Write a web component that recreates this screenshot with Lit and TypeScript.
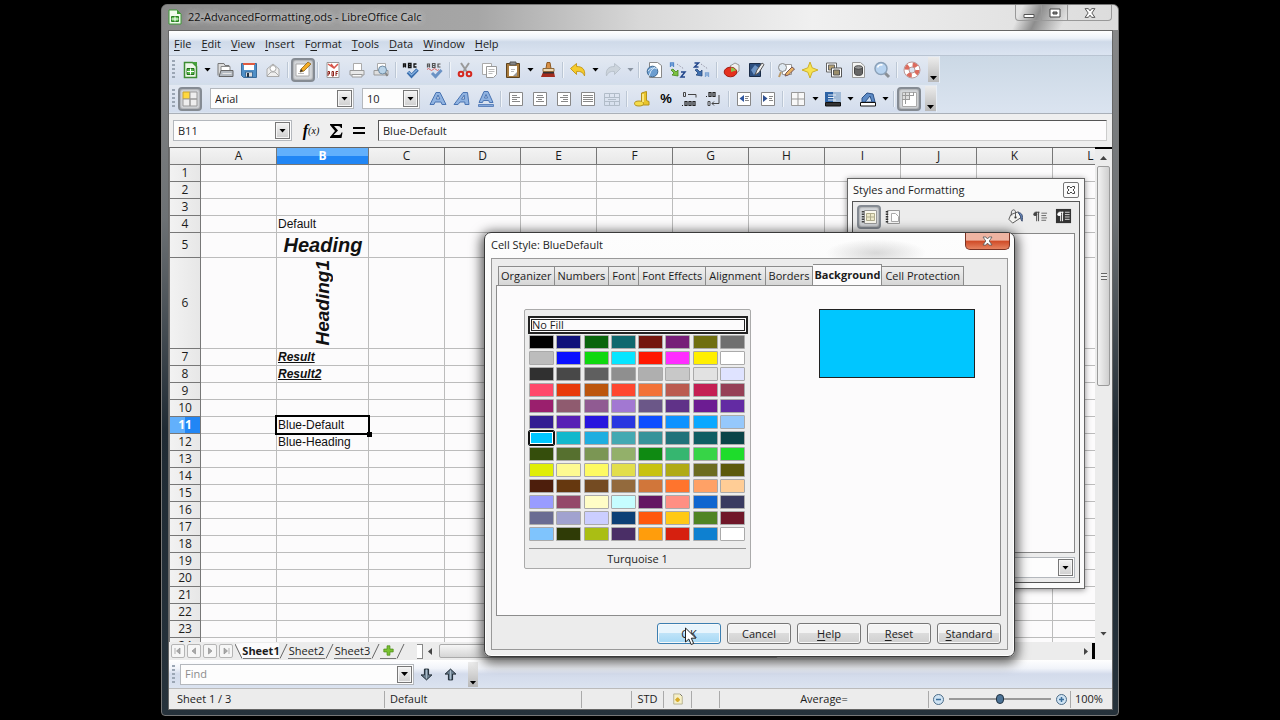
import { LitElement, html, css, svg, nothing } from "lit";
import { customElement, property, state } from "lit/decorators.js";
import { classMap } from "lit/directives/class-map.js";

const page = svg`<path d="M2.500 2.500h13v13h-13z" fill="#fff" stroke="#888"/>`;
const letterA = "M1 14.500 L7 2.500 H11 L17 14.500 H13 L12 12 H6 L5 14.500Z M7.200 9 H10.800 L9 5Z";

const icons: Record<string, unknown> = {
  newDoc: svg`<path d="M3.500 1.500h8l4 4v11h-12z" fill="#eef8ea" stroke="#3d8d33" stroke-width="1.500"/><path d="M11 1l5 5V1z" fill="#46a13b"/><path d="M6 7.500h7v6H6z" fill="#54b848" stroke="#256e1e"/><path d="M6 10.500h7M9.500 7.500v6" stroke="#fff"/>`,
  open: svg`<path d="M2 14.500V2.500h6l1 2h4v3" fill="#dcdcdc" stroke="#777"/><path d="M5 5.500h9v5H5z" fill="#fff" stroke="#888"/><path d="M3 15.500l2-6h12v6z" fill="#b4bac1" stroke="#666"/><path d="M6.500 12.500h9" stroke="#e6e6e6"/>`,
  save: svg`<path d="M1.500 2.500h15v14h-13l-2-2z" fill="#4f8fc7" stroke="#3a6b9a"/><path d="M4 2h10v7H4z" fill="#fff"/><path d="M3 2h12v2H3z" fill="#df5b40"/><path d="M5.500 11h7v5h-7z" fill="#ddd" stroke="#3a6b9a"/><path d="M7 12h2v4H7z" fill="#234"/>`,
  mail: svg`<path d="M3 8l6-5 6 5v7.500H3z" fill="#eee" stroke="#aaa"/><circle cx="9" cy="7.500" r="3" fill="#fff" stroke="#aaa"/><path d="M3 15l4-4h4l4 4" fill="none" stroke="#aaa"/>`,
  edit: svg`<path d="M2 3h13v12H2z" fill="#fff" stroke="#aaa"/><path d="M6 11l1-3 7-7 3 2-7 7z" fill="#f3ab23" stroke="#8d6420" stroke-width=".8"/><path d="M6 11l1-3 2 2z" fill="#333"/><path d="M4 12.500h6" stroke="#bbb"/>`,
  pdf: svg`<path d="M3 1.500h12v15H3z" fill="#fff" stroke="#999"/><path d="M4 3l6 4 4-4M7 3l3 4" stroke="#d8554b" stroke-width="1.500" fill="none"/><path d="M4 15V10.500h1.500V13H4M8 10.500V15h1.500v-4.500zM12 15v-4.500h2M12 12.500h1.500" stroke="#8d2019" fill="none"/>`,
  print: svg`<path d="M5.500 9V2.500h8V9" fill="#fff" stroke="#aaa"/><path d="M2 14V9.500h14V14z" fill="#e8e8e8" stroke="#999"/><path d="M4 13.500h10v2.500H4z" fill="#fafafa" stroke="#999"/>`,
  preview: svg`<path d="M5.500 9V2.500h8V9" fill="#fff" stroke="#aaa"/><path d="M2 14V9.500h14V14z" fill="#dedede" stroke="#999"/><circle cx="10.500" cy="9" r="4" fill="#b9d3e8" stroke="#6f8ba3"/><path d="M13.500 12l2 3" stroke="#888" stroke-width="2"/>`,
  spell: svg`<path d="M1.500 6.500V3h2v3.500M1.500 5h2M6.500 6.500V2.500H9v4zM6.500 4.500H9M14.500 3H12v3h2.500" stroke="#111" stroke-width="1.300" fill="none"/><path d="M6 11l3.500 4L15.500 8.500" stroke="#3b6fae" stroke-width="3.500" fill="none"/><path d="M6.500 11l3 3L15 9" stroke="#86b1e0" stroke-width="1.200" fill="none"/>`,
  autospell: svg`<path d="M1.500 6.500V3h2v3.500M1.500 5h2M6.500 6.500V2.500H9v4zM6.500 4.500H9M14.500 3H12v3h2.500" stroke="#555" stroke-width="1.200" fill="none"/><path d="M1 8.500q1.500-2 3 0t3 0 3 0 3 0" stroke="#d66" fill="none"/><path d="M6 12l3.500 3.500L15.500 9" stroke="#6b92c4" stroke-width="3" fill="none"/>`,
  cut: svg`<path d="M5 2l6 9M13 2L7 11" stroke="#9a9a9a" stroke-width="2"/><circle cx="5" cy="13" r="2.300" fill="none" stroke="#d5281f" stroke-width="2"/><circle cx="13" cy="13" r="2.300" fill="none" stroke="#d5281f" stroke-width="2"/>`,
  copy: svg`<path d="M2.500 2.500h9v11h-9z" fill="#fff" stroke="#aaa"/><path d="M6.500 5.500h10v8l-3 3h-7z" fill="#fff" stroke="#999"/><path d="M8.500 8.500h6M8.500 10.500h6M8.500 12.500h4" stroke="#bbb"/>`,
  paste: svg`<path d="M2.500 2.500h13v14h-13z" fill="#a77a3c" stroke="#5c421f"/><path d="M5 5h8v10H5z" fill="#fff"/><path d="M6 1h6v3H6z" fill="#888" stroke="#555"/><path d="M7 8.500h4M7 10.500h3" stroke="#bbb"/><path d="M9 15l4-4v4z" fill="#999"/>`,
  brush: svg`<path d="M8 1.500h3l1 6H7z" fill="#d99046" stroke="#8f5a22"/><path d="M4 7.500h11v3H4z" fill="#eed9b4" stroke="#8f6a3a"/><path d="M4 11h11l1 5H2z" fill="#a32b1e"/><path d="M4 11h11v1.500H4z" fill="#333"/>`,
  undo: svg`<path d="M1.500 7.500l6-5v3c6 0 9 3 8 9.500-1-3-3-5-8-4.500v3z" fill="#f5cb2a" stroke="#c79b1e"/>`,
  redo: svg`<path d="M16.500 7.500l-6-5v3c-6 0-9 3-8 9.500 1-3 3-5 8-4.500v3z" fill="#ccd4dc" stroke="#b9c2cc"/>`,
  link: svg`<path d="M4.500 1.500h8l4 3v12h-12z" fill="#fff" stroke="#888"/><circle cx="7.500" cy="10.500" r="5.300" fill="#6b9dd0" stroke="#3d678f"/><path d="M3 10q5-5 9-2M4 15q1-6 6-9" stroke="#d6e8f8" fill="none"/>`,
  sortAsc: svg`<path d="M1.500 6V2h3v4M1.500 4h3" stroke="#5288cc" stroke-width="1.300" fill="none"/><path d="M12 11h4l-4 5h4" stroke="#23478c" stroke-width="1.500" fill="none"/><path d="M8 3l7 5" stroke="#99a" stroke-dasharray="1.500 1.500"/><path d="M2 9l3 3-2 2 6 1V9L7 11 4 8z" fill="#7cc142" stroke="#45861c" stroke-width=".8"/>`,
  sortDesc: svg`<path d="M1.500 2h4l-4 4h4" stroke="#23478c" stroke-width="1.500" fill="none"/><path d="M12.500 16v-4h3v4M12.500 14h3" stroke="#7da4d4" stroke-width="1.300" fill="none"/><path d="M8 3l7 5" stroke="#99a" stroke-dasharray="1.500 1.500"/><path d="M2 9l3 3-2 2 6 1V9L7 11 4 8z" fill="#3f6fb0" stroke="#27497c" stroke-width=".8"/>`,
  chart: svg`<path d="M7 5l5-3 4 2v6l-4 3z" fill="#efefef" stroke="#999"/><ellipse cx="7.500" cy="11" rx="6.300" ry="4.800" fill="#e5301e" stroke="#a31b10"/><path d="M8 11V6.500a6 4 0 0 1 5 3z" fill="#8fc04a"/>`,
  draw: svg`<path d="M2.500 2.500h11v13h-11z" fill="#2c4f80" stroke="#1a2c48"/><path d="M4 9l4-5 4 3-5 7z" fill="#6c93c4"/><path d="M8 14l2-5 5-7 2 1.500-5 8z" fill="#eee" stroke="#555"/>`,
  find: svg`<path d="M5.500 3.500h9v10h-9z" fill="#fff" stroke="#999"/><circle cx="5.500" cy="6.500" r="4" fill="#dfe9f2" stroke="#888"/><path d="M8 15l1-3 6-6 2.500 2-6 6z" fill="#e8b264" stroke="#755"/><path d="M4 11l-2 5" stroke="#b96" stroke-width="2"/>`,
  navigator: svg`<path d="M9 1l2.200 5.800L17 9l-5.800 2.200L9 17l-2.200-5.800L1 9l5.800-2.200z" fill="#f7e352" stroke="#cdb02c"/>`,
  gallery: svg`<path d="M1.500 2h10v9h-10z" fill="#fff" stroke="#666"/><path d="M3.500 4h6v5h-6z" fill="#b7a375" stroke="#666"/><path d="M6.500 7h10v9h-10z" fill="#fff" stroke="#555"/><path d="M8.500 9h6v5h-6z" fill="#9b8e6b" stroke="#555"/>`,
  data: svg`<path d="M3.500 1.500h8l4 3.500v11.500h-12z" fill="#f6f6f4" stroke="#999"/><path d="M5.500 6.500v6c0 2.500 8 2.500 8 0v-6" fill="#666" stroke="#444"/><ellipse cx="9.500" cy="6.500" rx="4" ry="1.800" fill="#999" stroke="#444"/>`,
  zoom: svg`<path d="M12 12l4 4" stroke="#8a8f95" stroke-width="3"/><circle cx="8" cy="7.500" r="6" fill="#b7d3f0" stroke="#8ba1b8" stroke-width="1.500"/><path d="M4.500 6.500a4 4 0 0 1 5-2.500" stroke="#fff" stroke-width="1.500" fill="none"/>`,
  help: svg`<circle cx="9" cy="9" r="5.500" fill="none" stroke="#fff" stroke-width="5"/><circle cx="9" cy="9" r="5.500" fill="none" stroke="#dc6b5e" stroke-width="4.500" stroke-dasharray="4.320 4.320"/><circle cx="9" cy="9" r="8" fill="none" stroke="#b99"/><circle cx="9" cy="9" r="3" fill="none" stroke="#b99"/>`,
  styles: svg`<path d="M2 2h7v7H2z" fill="#ffd83d" stroke="#c9a32a"/><path d="M9 2h7v7H9zM2 9h7v7H2zM9 9h7v7H9z" fill="#eee" stroke="#999"/>`,
  bold: svg`<path d=${letterA} fill="#8fb2e0" stroke="#4a74b2" fill-rule="evenodd"/>`,
  italic: svg`<path d="M1 14.500L10 2.500h4.500l1.500 12h-4l-.2-2.500H7L5 14.500zM8.500 9.200h3l-.3-4z" fill="#8fb2e0" stroke="#4a74b2" fill-rule="evenodd"/>`,
  underline: svg`<path d="M2 12.500L7 1.500h4l5 11h-3.500l-.8-2H6.300l-.8 2zM7.500 8h3L9 4.500z" fill="#8fb2e0" stroke="#4a74b2" fill-rule="evenodd"/><path d="M1.500 14.500h15v2h-15z" fill="#86a9da" stroke="#4a74b2" stroke-width=".8"/>`,
  left: svg`${page}<path d="M5 5.500h5M5 7.500h8M5 9.500h5M5 11.500h8" stroke="#888"/>`,
  center: svg`${page}<path d="M6 5.500h6M5 7.500h8M7 9.500h4M5 11.500h8" stroke="#888"/>`,
  right: svg`${page}<path d="M8 5.500h5M5 7.500h8M8 9.500h5M6 11.500h7" stroke="#888"/>`,
  justify: svg`${page}<path d="M4 5.500h10M4 7.500h10M4 9.500h10M4 11.500h10" stroke="#888"/>`,
  merge: svg`<path d="M1.500 3.500h15v12h-15zM1.500 7.500h15M1.500 11.500h15M6.500 3.500v4M11.500 3.500v4M6.500 11.500v4M11.500 11.500v4M5 9.500h8" fill="none" stroke="#b1bcc8"/>`,
  currency: svg`<path d="M8.500 3l5-1.500v9l2.500 1V15H8.500z" fill="#e9c52c" stroke="#b3921c"/><ellipse cx="6" cy="13.500" rx="4.500" ry="2.500" fill="#f5dc4a" stroke="#b3921c"/><path d="M10 4v8" stroke="#fff1a0" stroke-width="1.500"/>`,
  addDec: svg`<path d="M2.500 2.500h2v4h-2zM7 4.500h8v3" stroke="#444" fill="none"/><path d="M1 15.500h1M4 11.500h2v4H4zM8 11.500h2v4H8zM12 11.500h2v4h-2z" stroke="#222" stroke-width="1.200" fill="none"/>`,
  delDec: svg`<path d="M1 6.500h1M4 2.500h2v4H4zM8 2.500h2v4H8z" stroke="#222" stroke-width="1.200" fill="none"/><path d="M3 11.500h2v4H3zM7 13.500h7V5M9 11.500l-2 2 2 2" stroke="#444" fill="none"/>`,
  outdent: svg`${page}<path d="M9 5v7L4.500 8.500z" fill="#2e56a0"/><path d="M10 6.500h4M10 8.500h3M10 10.500h4" stroke="#888"/>`,
  indent: svg`${page}<path d="M4 5v7l4.500-3.500z" fill="#2e4f90"/><path d="M10 6.500h4M10 8.500h3M10 10.500h4" stroke="#888"/>`,
  borders: svg`<path d="M2.500 2.500h13v13h-13zM2.500 9h13M9 2.500v13" fill="#f8f8f8" stroke="#999"/>`,
  bgColor: svg`<path d="M1 2h16v10H1z" fill="#2d63a5"/><path d="M9 2h8v10H9z" fill="#a3bbd6"/><path d="M4 5h8M4 7.500h6M4 10h8" stroke="#e6eef8"/><path d="M1.500 12.500h15v3.500h-15z" fill="#333" stroke="#111"/>`,
  lineColor: svg`<path d="M3 12V8l5-5 6 1 2 8z" fill="#5d8bc6" stroke="#2c5288"/><path d="M6 12l5-6 2 6z" fill="#d4e2f2" stroke="#2c5288"/><path d="M1.500 12.500h15v3.500h-15z" fill="#fff" stroke="#111"/>`,
  gridLines: svg`<path d="M2.500 2.500h14v14h-14z" fill="#fff" stroke="#aaa"/><path d="M3 3h6v6H3z" fill="#ddd"/><path d="M2 5.500h12M2 9.500h8M5.500 2v12M9.500 2v8M13.500 2v4" stroke="#999"/>`,
  cellStyles: svg`<path d="M4.500 2.500h12v13h-12z" fill="#fbf9ee" stroke="#999"/><path d="M3 3v12" stroke="#444" stroke-width="2.500" stroke-dasharray="1.500 1"/><path d="M6.500 5.500h8v7h-8zM6.500 9h8M10.500 5.500v7" fill="#eeeacb" stroke="#b0ac8c"/>`,
  pageStyles: svg`<path d="M3.500 2.500h12v13h-12z" fill="#f7f7f7" stroke="#999"/><path d="M3 3v12" stroke="#333" stroke-width="2.500" stroke-dasharray="1.500 1"/><path d="M7.500 5.500h4l3 3v5h-7z" fill="#fff" stroke="#aaa"/>`,
  fill: svg`<path d="M4 7l8-3 3 6-9 6-4-4z" fill="#f3f3f0" stroke="#555"/><path d="M5 8c-2-6 3-8 4-4v5" stroke="#555" fill="none"/><path d="M12 5c4 0 5 3 4 9-2-2-1-5-2-6z" fill="#6d91c8" stroke="#346"/><circle cx="9" cy="10" r="1.200" fill="#333"/>`,
  newStyle: svg`<path d="M6 4v10M8 4v10M9 4.500H4" stroke="#444" fill="none"/><circle cx="4.500" cy="6.500" r="2" fill="#444"/><path d="M11 5.500h6M11 8h5M11 10.500h6M11 13h5" stroke="#666"/>`,
  updateStyle: svg`<path d="M1 1h16v15H1z" fill="#333"/><path d="M6 4v10M8 4v10M9 4.500H4" stroke="#fff" fill="none"/><circle cx="4.500" cy="6.500" r="2" fill="#fff"/><path d="M10.500 4.500h5M10.500 7h5M10.500 9.500h5M10.500 12h5" stroke="#ddd"/>`,
  down: svg`<path d="M6.500 2.500h5v7h4L9 15.500 2.500 9.500h4z" fill="#6d8192" stroke="#1f2a33" stroke-width="1.200"/><path d="M9 3v11" stroke="#b7c6d2"/>`,
  up: svg`<path d="M6.500 15.500h5v-7h4L9 2.500 2.500 8.500h4z" fill="#6d8192" stroke="#1f2a33" stroke-width="1.200"/><path d="M9 4v11" stroke="#b7c6d2"/>`,
  modified: svg`<path d="M3.500 2.500h8l3 3v10h-11z" fill="#f6f0c8" stroke="#aaa584"/><path d="M8.500 7v6M5.500 10h6" stroke="#dbb236" stroke-width="2"/><circle cx="8.500" cy="10" r="2.500" fill="#d8ab2c"/><path d="M12 3l2 2" stroke="#555"/>`,
  plus: svg`<path d="M7 2.500h4V7h4.500v4H11v4.500H7V11H2.500V7H7z" fill="#79c231" stroke="#4b8a18"/>`,
};

const icon = (name: string, size = 18) =>
  html`<svg width=${size} height=${size} viewBox="0 0 18 18" aria-hidden="true">${icons[name]}</svg>`;

const shared = css`
  :host { box-sizing: border-box; font: 11px/16px "Open Sans", "Noto Sans", sans-serif; color: #1c1c1c; }
  * { box-sizing: border-box; }
  button, input, select { font: inherit; color: inherit; margin: 0; padding: 0; border: 0; background: none; border-radius: 0; outline: none; min-width: 0; }
  button { display: flex; align-items: center; justify-content: center; flex: none; }
  svg { display: block; flex: none; }
  .tool { width: 24px; height: 24px; }
  .pressed { border: 2px solid #858b93; border-radius: 4px; background: #d3d6da; box-shadow: inset 0 0 2px #666; }
  .combo { display: flex; align-items: stretch; height: 21px; border: 1px solid #b4b8bd; background: #fdfdfd; padding: 1px; }
  .combo input, .combo select { appearance: none; flex: 1; padding-left: 3px; }
  .combo input::placeholder { color: #8c8c8c; opacity: 1; }
  .combo.pick { display: grid; }
  .combo.pick > * { grid-area: 1 / 1; }
  .combo .drop { justify-self: end; }
  .drop { display: flex; align-items: center; justify-content: center; width: 15px; border: 1px solid #777; background: linear-gradient(#f4f4f4, #cfcfcf); box-shadow: inset 0 0 0 1px #f6f6f6; pointer-events: none; }
  .tri { width: 7px; height: 4px; background: #000; clip-path: polygon(0 0, 100% 0, 50% 100%); }
`;

const tri = html`<span class="tri"></span>`;

const standardBar = ["newDoc", ">", "open", "save", "mail", "|", "*edit", "|", "pdf", "print", "preview", "|", "spell", "autospell", "|", "cut", "copy", "paste", ">", "brush", "|", "undo", ">", "redo", "<", "|", "link", "sortAsc", "sortDesc", "|", "chart", "draw", "|", "find", "navigator", "gallery", "data", "zoom", "|", "help"];
const formatBar = ["bold", "italic", "underline", "|", "left", "center", "right", "justify", "merge", "|", "currency", "%", "addDec", "delDec", "|", "outdent", "indent", "|", "borders", ">", "bgColor", ">", "lineColor", ">", "|", "*gridLines"];

const renderTool = (t: string) => {
  if (t === "|") return html`<span class="sep"></span>`;
  if (t === ">" || t === "<") return html`<button class="caret ${t === "<" ? "off" : ""}" aria-label="More options">${tri}</button>`;
  if (t === "%") return html`<button class="tool percent">%</button>`;
  const pressed = t.startsWith("*");
  const name = pressed ? t.slice(1) : t;
  return html`<button class="tool ${pressed ? "pressed" : ""}" aria-label=${name}>${icon(name)}</button>`;
};

const swatches = `
000000 10127a 0a650d 0f686e 74170e 771f78 6f6e10 6f6f6f
bcbcbc 0a10ff 0fd80f 06e5ff ff1700 ff2dff ffef00 ffffff
303030 484848 5f5f5f 8f8f8f afafaf c8c8c8 e2e2e2 dfe3ff
ff4a6b e83a0a bc560c ff472f f27238 bb5b50 c41f53 964056
9a1f6d 8f5b6f 905b92 a278d2 6b5788 603288 6c1c92 632ba3
331c92 5720b5 2716de 2937e0 0e4eff 0e92ff 0aa8ff 95c8fb
00c6ff 12b8cc 1eaee0 43a9b2 37939a 20727a 0f5e63 0a4448
354e0c 56702f 7b9654 93b06a 0f8a12 36b670 37d447 1edc2b
e0ee06 fdfa92 fdfa62 e2de4b c8c211 b0aa14 6c6c20 5d5a0c
4d1e0c 66380f 744b22 936a3d d1763a ff742d ffa166 ffcd96
999cff 94496a fffdc6 c6fdff 641762 ff8f83 0f65cf 393a60
6a6c92 a1a2cf cbceff 0d4076 ff580e ffc915 508424 701729
7fc4fd 2f3b06 aabe14 4a2e66 ff9d0c d6200f 0e80d0 ffffff`.trim().split(/\s+/).map((c) => "#" + c);

@customElement("calc-sheet")
export class CalcSheet extends LitElement {
  static styles = [shared, css`
    :host { display: flex; flex: 1; min-height: 0; overflow: hidden; background: #fcfbfc; }
    .view { flex: 1; overflow: hidden; min-width: 0; }
    table { table-layout: fixed; width: 0; border-spacing: 0; border-left: 1px solid #777; border-top: 1px solid #666; }
    .head-col { width: 31px; }
    .col { width: 76px; }
    .wide { width: 92px; }
    th { font-weight: 400; font-size: 12px; line-height: 14px; padding: 0; text-align: center; background: linear-gradient(#f3f3f3, #e8e8e8); border-right: 1px solid #777; border-bottom: 1px solid #777; }
    tbody th { background: linear-gradient(90deg, #f2f2f2, #e7e7e7); }
    thead th { height: 16px; }
    thead th.on { background: linear-gradient(#62b0fc 50%, #2186f5 50%); color: #fff; font-weight: 700; }
    tbody th.on { background: linear-gradient(90deg, #62b0fc 50%, #2186f5 50%); color: #fff; font-weight: 700; }
    tr { height: 17px; }
    tr.tall { height: 25px; }
    tr.high { height: 91px; }
    td { padding: 0 0 0 1px; border-right: 1px solid #bcbcbc; border-bottom: 1px solid #bcbcbc; font: 12px/15px "Liberation Sans", Arial, sans-serif; white-space: nowrap; color: #111; }
    .heading { font: italic 700 20px/22px "Liberation Sans", Arial, sans-serif; text-align: center; }
    .turned { display: inline-block; writing-mode: vertical-rl; transform: rotate(180deg); font-size: 19px; vertical-align: middle; }
    .result { font-weight: 700; font-style: italic; text-decoration: underline; }
    .cursor { position: relative; }
    .cursor::before { content: ""; position: absolute; inset: -2px; border: 2px solid #000; }
    .cursor::after { content: ""; position: absolute; right: -4px; bottom: -4px; width: 5px; height: 5px; background: #000; }
    .vbar { width: 17px; flex: none; display: flex; flex-direction: column; align-items: center; background: #ececec; border-top: 2px solid #000; }
    .vbar button { height: 17px; }
    .flip { transform: scaleY(-1); }
    .thumb { width: 13px; height: 220px; border: 1px solid #9b9b9b; border-radius: 2px; background: linear-gradient(90deg, #f2f2f2, #cfcfcf); display: flex; align-items: center; justify-content: center; }
    .grip { width: 6px; height: 7px; background: repeating-linear-gradient(#666 0 1px, #eee 1px 3px); }
    .track { flex: 1; }
    .tri { background: #444; }
  `];

  private text(row: number) {
    switch (row) {
      case 4: return html`<td>Default</td>`;
      case 5: return html`<td class="heading">Heading</td>`;
      case 6: return html`<td class="heading"><span class="turned">Heading1</span></td>`;
      case 7: return html`<td class="result">Result</td>`;
      case 8: return html`<td class="result">Result2</td>`;
      case 11: return html`<td class="cursor">Blue-Default</td>`;
      case 12: return html`<td>Blue-Heading</td>`;
      default: return html`<td></td>`;
    }
  }

  render() {
    const cols = [..."ABCDEFGHIJKL"];
    const rows = Array.from({ length: 24 }, (_, i) => i + 1);
    return html`
      <div class="view"><table>
        <colgroup><col class="head-col" />${cols.map((c) => html`<col class=${c === "B" ? "wide" : "col"} />`)}</colgroup>
        <thead><tr><th></th>${cols.map((c) => html`<th class=${c === "B" ? "on" : ""}>${c}</th>`)}</tr></thead>
        <tbody>${rows.map((r) => html`<tr class=${classMap({ tall: r === 5, high: r === 6 })}>
          <th class=${r === 11 ? "on" : ""}>${r}</th>
          ${cols.map((c) => (c === "B" ? this.text(r) : html`<td></td>`))}
        </tr>`)}</tbody>
      </table></div>
      <div class="vbar">
        <button aria-label="Scroll up"><span class="tri flip"></span></button>
        <div class="thumb"><span class="grip"></span></div>
        <div class="track"></div>
        <button aria-label="Scroll down">${tri}</button>
      </div>`;
  }
}

@customElement("styles-panel")
export class StylesPanel extends LitElement {
  static styles = [shared, css`
    :host { display: flex; flex-direction: column; background: #fbfbfb; border: 1px solid #666; padding: 0 4px 5px; box-shadow: 0 1px 6px rgba(0, 0, 0, .45); }
    header { display: flex; align-items: center; justify-content: space-between; height: 22px; padding: 0 1px; }
    .close { width: 16px; height: 16px; border: 1px solid #777; border-radius: 2px; }
    .body { flex: 1; display: flex; flex-direction: column; background: #ececec; border: 1px solid #555; padding: 2px 4px 4px; gap: 4px; }
    .row { display: flex; align-items: center; height: 25px; }
    .space { flex: 1; }
    .list { flex: 1; background: #fcfbfc; border: 1px solid #888; }
  `];
  render() {
    return html`
      <header><span>Styles and Formatting</span>
        <button class="close" aria-label="Close"><svg width="8" height="8" viewBox="0 0 8 8"><path d="M.5 .5h2L4 2 5.500.5h2v2L6 4l1.500 1.500v2h-2L4 6 2.500 7.500h-2v-2L2 4 .5 2.500z" fill="none" stroke="#444"/></svg></button>
      </header>
      <div class="body">
        <div class="row">
          <button class="tool pressed" aria-label="Cell Styles">${icon("cellStyles")}</button>
          <button class="tool" aria-label="Page Styles">${icon("pageStyles")}</button>
          <span class="space"></span>
          ${["fill", "newStyle", "updateStyle"].map((n) => html`<button class="tool" aria-label=${n}>${icon(n, 17)}</button>`)}
        </div>
        <div class="list"></div>
        <label class="combo pick"><select aria-label="Style group"><option></option></select><span class="drop">${tri}</span></label>
      </div>`;
  }
}

@customElement("style-dialog")
export class StyleDialog extends LitElement {
  @state() private picked = 48;
  static styles = [shared, css`
    :host { display: flex; flex-direction: column; border: 1px solid #3a3a3a; border-radius: 7px; padding: 0 6px 6px; background: linear-gradient(#fdfdfd, #efefef); box-shadow: inset 0 0 0 1px #fff, 0 3px 12px 3px rgba(0, 0, 0, .65); }
    header { display: flex; justify-content: space-between; height: 25px; margin-right: -2px; background: radial-gradient(50px 14px at 385px 20px, rgba(150, 150, 150, .35), transparent); }
    .title { padding: 4px 0 0; }
    .close { width: 45px; height: 17px; border: 1px solid #7a3324; border-top: 0; border-radius: 0 0 5px 5px; background: linear-gradient(#eeb4a2 45%, #cf4a26 50%, #e68360); }
    .body { flex: 1; display: flex; flex-direction: column; border: 1px solid #999; background: #ececec; padding: 5px 6px 5px 4px; }
    .tabs { display: flex; align-items: flex-end; padding-left: 2px; }
    .tab { height: 19px; padding: 0 3px; border: 1px solid #8c8c8c; border-width: 1px 1px 0 0; background: linear-gradient(#f0f0f0, #d6d6d6); white-space: nowrap; }
    .tab:first-child { border-left-width: 1px; padding: 0 2px; }
    .tab.on { height: 22px; background: #fcfbfc; font-weight: 700; margin-bottom: -1px; padding: 0 1px 1px; }
    .pane { flex: 1; display: flex; align-items: flex-start; justify-content: space-between; border: 1px solid #8c8c8c; background: #fcfbfc; padding: 23px 25px 0 27px; }
    .palette { width: 227px; border: 1px solid #aaa; border-radius: 2px; background: #ededed; padding: 6px 2px 0 3px; }
    .none { width: 100%; height: 18px; border: 2px solid #222; outline: 1px solid #222; outline-offset: -4px; background: #fcfbfc; justify-content: flex-start; padding-left: 2px; }
    .grid { display: grid; grid-template-columns: repeat(8, 25px); justify-content: space-between; row-gap: 2px; padding: 1px 3px 0 1px; }
    .sw { height: 14px; width: 25px; border: 1px solid #aaa; border-radius: 1px; }
    .sw.on { outline: 1px solid #111; border: 1px solid #111; box-shadow: inset 0 0 0 1px #fff; }
    .name { border-top: 1px solid #999; margin: 7px 2px 0 1px; padding: 2px 0 1px; text-align: center; }
    .preview { width: 156px; height: 69px; border: 1px solid #222; }
    footer { display: flex; justify-content: flex-end; gap: 6px; padding-top: 7px; }
    .btn { width: 64px; height: 21px; border: 1px solid #777; border-radius: 3px; background: linear-gradient(#f3f3f3 45%, #dcdcdc 50%, #cfcfcf); box-shadow: inset 0 0 0 1px #f8f8f8; }
    .btn.main { border-color: #3c7fb1; background: linear-gradient(#e8f5fd 45%, #bfe3f8 50%, #a5d8f5); }
    u { text-underline-offset: 2px; }
  `];
  render() {
    const tabs = ["Organizer", "Numbers", "Font", "Font Effects", "Alignment", "Borders", "Background", "Cell Protection"];
    return html`
      <header><span class="title">Cell Style: BlueDefault</span>
        <button class="close" aria-label="Close"><svg width="11" height="10" viewBox="0 0 11 10"><path d="M1 1h3l1.500 2L7 1h3L7.200 5 10 9H7L5.500 7 4 9H1l2.800-4z" fill="#fff" stroke="#555" stroke-width=".8"/></svg></button>
      </header>
      <div class="body">
        <div class="tabs" role="tablist">${tabs.map((t) => html`<button role="tab" class="tab ${t === "Background" ? "on" : ""}" aria-selected=${t === "Background"}>${t}</button>`)}</div>
        <div class="pane">
          <div class="palette">
            <button class="none">No Fill</button>
            <div class="grid">${swatches.map((c, i) => html`<button class="sw ${i === this.picked ? "on" : ""}" style="background:${c}" aria-label="Colour ${c}" @click=${() => (this.picked = i)}></button>`)}</div>
            <div class="name">Turquoise 1</div>
          </div>
          <div class="preview" style="background:${swatches[this.picked]}"></div>
        </div>
        <footer>
          <button class="btn main">OK</button><button class="btn">Cancel</button><button class="btn"><span><u>H</u>elp</span></button><button class="btn"><span><u>R</u>eset</span></button><button class="btn"><span><u>S</u>tandard</span></button>
        </footer>
      </div>`;
  }
}

@customElement("tool-strip")
export class ToolStrip extends LitElement {
  @property({ attribute: false }) items: string[] = [];
  @property({ type: Boolean }) format = false;
  static styles = [shared, css`
    :host { display: flex; align-items: center; width: fit-content; padding-left: 3px; height: 27px; background: linear-gradient(#e3e9f2, #d3dded); border-right: 1px solid #e8eef6; }
    .grip { width: 3px; height: 19px; margin-right: 3px; background: repeating-linear-gradient(#9ba6b4 0 2px, transparent 2px 4px); }
    .sep { width: 6px; height: 16px; background: linear-gradient(90deg, transparent 2px, #bcc7d5 2px 3px, #f0f4f9 3px 4px, transparent 4px); }
    .caret { width: 11px; height: 24px; }
    .off .tri { background: #8b95a2; }
    .more { width: 11px; height: 25px; align-items: flex-end; padding-bottom: 2px; margin-left: 4px; background: linear-gradient(#ececec, #b8b8b8); }
    .font { width: 144px; margin: 0 8px; }
    .size { width: 58px; margin-right: 6px; }
    .percent { font: 700 13px/16px "Liberation Sans", sans-serif; color: #000; }
  `];
  render() {
    return html`<span class="grip"></span>
      ${this.format ? html`<button class="tool pressed" aria-label="Styles">${icon("styles")}</button>
        <label class="combo pick font"><select aria-label="Font name"><option>Arial</option></select><span class="drop">${tri}</span></label>
        <label class="combo pick size"><select aria-label="Font size"><option>10</option></select><span class="drop">${tri}</span></label>` : nothing}
      ${this.items.map(renderTool)}
      <button class="more" aria-label="Toolbar options">${tri}</button>`;
  }
}

@customElement("app-root")
export class AppRoot extends LitElement {
  static styles = [shared, css`
    :host { display: flex; height: 100vh; background: #000; padding: 4px 161px 4px; overflow: hidden; }
    .window { position: relative; flex: 1; min-width: 0; display: flex; flex-direction: column; border: 1px solid #777; border-radius: 6px 6px 4px 4px; padding: 0 5px 5px 6px; background: linear-gradient(#8b8b8b, #6d7174 30%, #1f2a33 60%, #26323b); }
    .bar { display: flex; align-items: center; height: 25px; margin: 0 -5px 0 -6px; padding: 0 6px 2px; gap: 6px; border-radius: 5px 5px 0 0; background: linear-gradient(115deg, transparent 89%, #8d8d8d 91%, transparent 94%), linear-gradient(90deg, #8a8a8a, #a2a2a2 24%, #a6a6a6 33%, #d8d8d8 50%, #f0f0f0 68%, #dcdcdc); }
    .caption { flex: 1; color: #111; text-shadow: 0 0 6px #ddd, 0 0 6px #ddd; }
    .ctl { display: flex; align-self: flex-start; border: 1px solid #999; border-top: 0; border-radius: 0 0 4px 4px; }
    .ctl button { width: 26px; height: 15px; border-right: 1px solid #999; }
    .ctl .x { width: 43px; border: 0; }
    .client { flex: 1; min-height: 0; display: flex; flex-direction: column; border: 1px solid #666; background: #efefef; }
    nav { display: flex; align-items: center; gap: 10px; height: 25px; padding: 2px 5px 0; background: linear-gradient(#fff, #edf2f9 30%, #cfdae9 45%, #dbe4f1); border-bottom: 1px solid #b9c4d2; }
    nav a { color: inherit; text-decoration: none; }
    u { text-underline-offset: 2px; }
    .dock { display: flex; flex-direction: column; gap: 2px; background: linear-gradient(#cbd8e5, #dbe4f0); border-bottom: 1px solid #aab0b8; padding-bottom: 1px; }
    .formula { display: flex; align-items: center; height: 33px; padding: 0 5px 0 4px; }
    .namebox { width: 119px; }
    .namebox input { width: 60px; }
    .fx { display: flex; align-items: center; gap: 9px; padding: 0 12px 0 10px; }
    .fx button { height: 20px; color: #000; }
    .fn { width: 18px; font: italic 700 16px/20px "Liberation Serif", serif; }
    .fn small { font-size: 10px; font-weight: 400; }
    .sum { width: 14px; }
    .line { flex: 1; height: 21px; padding-left: 4px; background: #fdfcfd; border: 1px solid #ccc; border-top: 1px solid #555; border-left: 1px solid #555; }
    .sheets { display: flex; align-items: center; height: 18px; padding-left: 2px; background: #ececec; }
    .nav { width: 14px; height: 14px; margin-right: 2px; border: 1px solid #b5b5b5; border-radius: 2px; background: #f6f6f6; }
    .tabs { display: flex; align-items: stretch; height: 16px; }
    .tabs button { width: 37px; border-bottom: 1px solid #777; background: #ececec; white-space: nowrap; }
    .tabs .on { width: 36px; background: #fcfbfc; font-weight: 700; }
    .tabs .add { width: 16px; }
    .split { width: 6px; height: 15px; margin-left: 12px; border: 1px solid #888; border-left: 0; background: #fff; }
    .hnav { width: 14px; }
    .thumb { flex: 1; height: 14px; border: 1px solid #aaa; border-radius: 2px; background: linear-gradient(#f6f6f6, #d5d5d5); }
    .hthumb { display: flex; flex: 1; padding: 0 300px 0 2px; }
    .endbar { width: 3px; height: 16px; margin: 0 17px 0 0; background: #000; }
    .find { display: flex; align-items: center; height: 29px; padding-left: 3px; background: linear-gradient(#fff, #f1f4fa 30%, #d3dbeb 50%, #dbe3f0); border-bottom: 1px solid #bbb; }
    .grip { width: 3px; height: 19px; margin-right: 5px; background: repeating-linear-gradient(#9ba6b4 0 2px, transparent 2px 4px); }
    .search { width: 234px; }
    .more { width: 10px; height: 25px; align-items: flex-end; padding-bottom: 2px; margin-left: 6px; background: linear-gradient(#ececec, #b8b8b8); }
    .status { display: grid; grid-template-columns: 215px 197px 50px 32px 28px 28px 1fr 142px 42px; align-items: center; height: 20px; background: #ececec; }
    .status > * { display: flex; align-items: center; justify-content: center; height: 17px; border-left: 1px solid #aaa; }
    .status .start { justify-content: flex-start; padding-left: 5px; }
    .status .first { border: 0; padding-left: 8px; }
    .status .last { justify-content: flex-start; padding-left: 4px; }
    .slide { gap: 4px; }
    input[type="range"] { appearance: none; width: 102px; height: 12px; }
    input[type="range"]::-webkit-slider-runnable-track { height: 2px; background: #999; }
    input[type="range"]::-webkit-slider-thumb { appearance: none; width: 8px; height: 10px; margin-top: -4px; border: 1px solid #234; border-radius: 4px; background: #4c7396; }
    .panel { position: absolute; left: 685px; top: 173px; width: 238px; height: 411px; }
    .dialog { position: absolute; left: 322px; top: 227px; width: 531px; height: 425px; }
    .pointer { position: absolute; left: 522px; top: 622px; }
    .tri { flex: none; }
  `];
  render() {
    const menus = ["File", "Edit", "View", "Insert", "F_ormat", "Tools", "Data", "Window", "Help"];
    const arrow = (d: string) => html`<button class="nav" aria-label="Sheet navigation"><svg width="8" height="8" viewBox="0 0 8 8"><path d=${d} fill="#aaa" stroke="#888" stroke-width=".6"/></svg></button>`;
    const slash = html`<svg width="9" height="16" viewBox="0 0 9 16"><path d="M1 15.500L8 1" stroke="#666"/></svg>`;
    const knob = (d: string) => html`<button aria-label="Zoom"><svg width="13" height="13" viewBox="0 0 13 13"><circle cx="6.500" cy="6.500" r="5" fill="#cfe3f3" stroke="#4c6c88"/><path d=${d} stroke="#3b6f9c" stroke-width="1.500"/></svg></button>`;
    return html`<div class="window">
      <div class="bar">
        <svg width="14" height="16" viewBox="0 0 14 16"><path d="M1 1h8l4 4v10H1z" fill="#f1faee" stroke="#3f9a36"/><path d="M9 1v4h4z" fill="#3f9a36"/><path d="M3.500 7.500h7v5h-7z" fill="#5cbd50" stroke="#2b7d24"/><path d="M3.500 10h7M7 7.500v5" stroke="#fff"/></svg>
        <span class="caption">22-AdvancedFormatting.ods - LibreOffice Calc</span>
        <span class="ctl">
          <button aria-label="Minimize"><svg width="12" height="12" viewBox="0 0 12 12"><path d="M1 7.500h10v3H1z" fill="#fff" stroke="#555"/></svg></button>
          <button aria-label="Maximize"><svg width="12" height="12" viewBox="0 0 12 12"><path d="M1 2h10v8H1z" fill="#fff" stroke="#444"/><path d="M4 5h4v2H4z" fill="#888" stroke="#444"/></svg></button>
          <button class="x" aria-label="Close"><svg width="12" height="12" viewBox="0 0 11 10"><path d="M1 1h3l1.500 2L7 1h3L7.200 5 10 9H7L5.500 7 4 9H1l2.800-4z" fill="#fff" stroke="#444" stroke-width=".8"/></svg></button>
        </span>
      </div>
      <div class="client">
        <nav>${menus.map((m) => { const i = m.indexOf("_"); const k = i < 0 ? 0 : i; const t = m.replace("_", ""); return html`<a href="#">${t.slice(0, k)}<u>${t[k]}</u>${t.slice(k + 1)}</a>`; })}</nav>
        <div class="dock">
          <tool-strip .items=${standardBar}></tool-strip>
          <tool-strip format .items=${formatBar}></tool-strip>
        </div>
        <div class="formula">
          <label class="combo namebox"><input aria-label="Name box" value="B11" /><span class="drop">${tri}</span></label>
          <div class="fx">
            <button class="fn" aria-label="Function wizard">f<small>(x)</small></button>
            <button class="sum" aria-label="Sum"><svg width="14" height="16" viewBox="0 0 14 16"><path d="M1 1h12v4h-1q-.5-2-3-2H5l4 4.500L4.500 12H10q2 0 2.500-2.500h1L12.500 15H1v-1l5-6-5-6z"/></svg></button>
            <button class="sum" aria-label="Formula"><svg width="14" height="16" viewBox="0 0 14 16"><path d="M1 5h12M1 10h12" stroke="#000" stroke-width="2"/></svg></button>
          </div>
          <input class="line" aria-label="Formula" value="Blue-Default" />
        </div>
        <calc-sheet></calc-sheet>
        <div class="sheets">
          ${arrow("M1 1v6M6 1v6L2.500 4z")}${arrow("M5.500 1v6L2 4z")}${arrow("M2.500 1v6L6 4z")}${arrow("M7 1v6M2 1v6l3.500-3z")}
          <div class="tabs">
            <svg width="8" height="16" viewBox="0 0 8 16"><path d="M0 1l7 14.500h1V0z" fill="#fcfbfc"/><path d="M0 1l7 14.500" stroke="#666"/></svg>
            <button class="on">Sheet1</button>${slash}<button>Sheet2</button>${slash}<button>Sheet3</button>${slash}<button class="add" aria-label="Add sheet">${icon("plus", 13)}</button>${slash}
          </div>
          <span class="split"></span>
          <button class="hnav" aria-label="Scroll left"><svg width="5" height="7"><path d="M4 0v7L0 3.500z" fill="#444"/></svg></button>
          <div class="hthumb"><span class="thumb"></span></div>
          <button class="hnav" aria-label="Scroll right"><svg width="5" height="7"><path d="M1 0v7l4-3.500z" fill="#444"/></svg></button>
          <span class="endbar"></span>
        </div>
        <div class="find">
          <span class="grip"></span>
          <label class="combo search"><input aria-label="Find" placeholder="Find" /><span class="drop">${tri}</span></label>
          <button class="tool" aria-label="Find next">${icon("down", 15)}</button><button class="tool" aria-label="Find previous">${icon("up", 15)}</button>
          <button class="more" aria-label="Toolbar options">${tri}</button>
        </div>
        <div class="status">
          <span class="start first">Sheet 1 / 3</span><span class="start">Default</span><span></span><span>STD</span><span>${icon("modified", 14)}</span><span></span>
          <span>Average=</span>
          <span class="slide">${knob("M4 6.500h5")}<input type="range" aria-label="Zoom level" />${knob("M4 6.500h5M6.500 4v5")}</span><span class="last">100%</span>
        </div>
      </div>
      <styles-panel class="panel"></styles-panel>
      <style-dialog class="dialog"></style-dialog>
      <svg class="pointer" width="13" height="19" viewBox="0 0 13 19"><path d="M1.500 1v14l3.300-3 2.400 5.500 2.500-1-2.400-5.300h4.500z" fill="#fff" stroke="#222"/></svg>
    </div>`;
  }
}
